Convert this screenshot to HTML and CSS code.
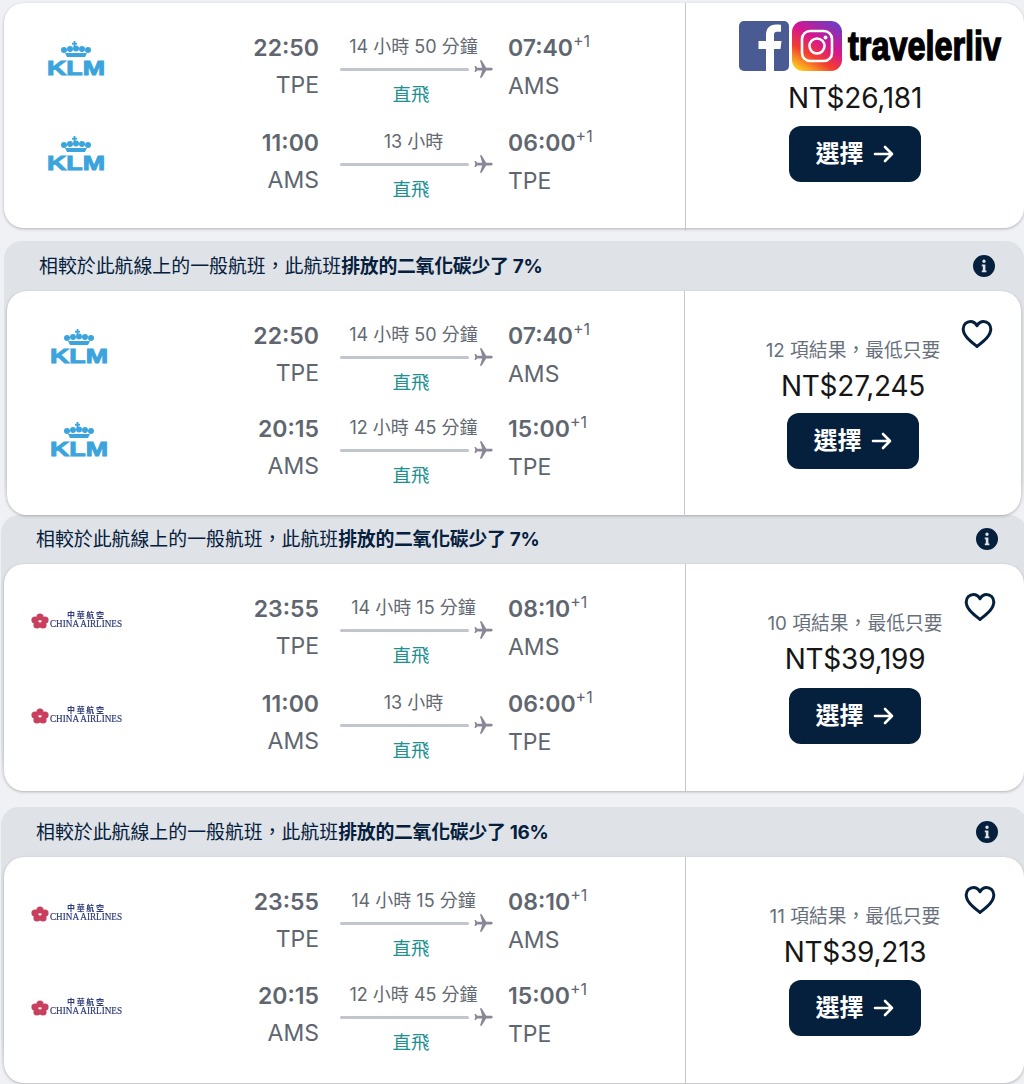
FILE: index.html
```html
<!DOCTYPE html>
<html lang="zh-Hant">
<head>
    <meta charset="UTF-8">
    <meta name="viewport" content="width=device-width, initial-scale=1.0">
    <link rel="stylesheet" href="styles.css">
    <title>航班結果</title>
</head>
<body>
    <svg class="sprite" aria-hidden="true">
        <symbol id="crown" viewBox="0 0 58 35">
            <rect x="26.6" y="0" width="1.8" height="6" />
            <rect x="25" y="1.8" width="5" height="1.8" />
            <circle cx="17" cy="9" r="3" />
            <circle cx="23" cy="8" r="3" />
            <circle cx="29" cy="7.5" r="3" />
            <circle cx="35" cy="8" r="3" />
            <circle cx="41" cy="9" r="3" />
            <path d="M18 12h22l-2 4H20z" />
        </symbol>
        <symbol id="blossom" viewBox="0 0 92 18">
            <g fill="#c9405f">
                <circle cx="10" cy="6" r="3.6" />
                <circle cx="15" cy="9" r="3.6" />
                <circle cx="13" cy="14" r="3.6" />
                <circle cx="7" cy="14" r="3.6" />
                <circle cx="5" cy="9" r="3.6" />
            </g>
        </symbol>
        <symbol id="plane" viewBox="0 0 24 24">
            <path d="M21.5 12c0-.9-.7-1.500-1.600-1.500H14.400L9.400 2.400H7.600l2.400 8.100H4.600L3 8.600H1.600l.9 3.400-.9 3.400H3l1.600-1.900H10l-2.400 8.100h1.800l5-8.100h5.500c.9 0 1.600-.6 1.600-1.500z" />
        </symbol>
        <symbol id="heart" viewBox="0 0 32 30">
            <path d="M16 27.500C9 21.800 2.200 16.600 2.200 10 2.200 5.600 5.600 2.400 9.400 2.400c2.700 0 5.100 1.500 6.600 4.300 1.500-2.800 3.900-4.300 6.600-4.300 3.800 0 7.200 3.200 7.200 7.600 0 6.600-6.800 11.800-13.800 17.500z" fill="none" stroke="currentColor" stroke-width="3" stroke-linejoin="round" />
        </symbol>
        <symbol id="info" viewBox="0 0 22 22">
            <path fill-rule="evenodd" d="M11 0a11 11 0 1 1 0 22 11 11 0 0 1 0-22zM11 4.500a1.700 1.700 0 1 0 0 3.400 1.700 1.700 0 0 0 0-3.400zM8.800 9.500v1.800h1v4.200h-1v1.800h4.600v-1.800h-1V9.500z" />
        </symbol>
        <symbol id="arrow" viewBox="0 0 22 20">
            <path d="M2 10h17M12 3l7 7-7 7" fill="none" stroke="currentColor" stroke-width="2.600" stroke-linecap="round" stroke-linejoin="round" />
        </symbol>
    </svg>

    <!-- result 1, the social badge sits over its price header -->
    <div class="card card-first">
        <div class="flights gap-9">
            <div class="leg">
                <div class="logo"><svg class="logo-klm" viewBox="0 0 58 35"><use href="#crown" /><text x="0" y="34" textLength="58" lengthAdjust="spacingAndGlyphs" class="klm-text">KLM</text></svg></div>
                <div class="end end-from"><div class="time">22:50</div><div class="code">TPE</div></div>
                <div class="route">
                    <div class="duration">14 小時 50 分鐘</div>
                    <div class="track"><span class="line"></span><svg class="plane"><use href="#plane" /></svg></div>
                    <div class="stops">直飛</div>
                </div>
                <div class="end"><div class="time">07:40<sup>+1</sup></div><div class="code">AMS</div></div>
            </div>
            <div class="leg">
                <div class="logo"><svg class="logo-klm" viewBox="0 0 58 35"><use href="#crown" /><text x="0" y="34" textLength="58" lengthAdjust="spacingAndGlyphs" class="klm-text">KLM</text></svg></div>
                <div class="end end-from"><div class="time">11:00</div><div class="code">AMS</div></div>
                <div class="route">
                    <div class="duration">13 小時</div>
                    <div class="track"><span class="line"></span><svg class="plane"><use href="#plane" /></svg></div>
                    <div class="stops">直飛</div>
                </div>
                <div class="end"><div class="time">06:00<sup>+1</sup></div><div class="code">TPE</div></div>
            </div>
        </div>
        <div class="offer">
            <div class="results"></div>
            <div class="price">NT$26,181</div>
            <button class="select"><span class="select-label">選擇</span><svg class="arrow"><use href="#arrow" /></svg></button>
        </div>
        <div class="social">
            <svg class="social-icon" viewBox="0 0 50 50">
                <rect width="50" height="50" rx="5" fill="#4a5a92" />
                <path d="M27 50V28h-7.500v-8H27v-6c0-7 4-10.500 10-10.500 2 0 4 .2 5 .3v7h-3.500c-3 0-3.500 1.500-3.500 3.700V20h7.500l-1 8H35v22z" fill="#fff" />
            </svg>
            <svg class="social-icon" viewBox="0 0 50 50">
                <defs>
                    <linearGradient id="ig" x1="0.2" y1="1" x2="0.8" y2="0">
                        <stop offset="0" stop-color="#fdc81e" />
                        <stop offset="0.3" stop-color="#f2402f" />
                        <stop offset="0.6" stop-color="#d6158f" />
                        <stop offset="1" stop-color="#6f3cc0" />
                    </linearGradient>
                </defs>
                <rect width="50" height="50" rx="11" fill="url(#ig)" />
                <rect x="10" y="10" width="30" height="30" rx="8" fill="none" stroke="#fff" stroke-width="2.600" />
                <circle cx="25" cy="25" r="7.500" fill="none" stroke="#fff" stroke-width="2.600" />
                <circle cx="33.500" cy="16.500" r="1.900" fill="#fff" />
            </svg>
            <svg class="social-name" viewBox="0 0 155 50"><text x="0" y="39" textLength="153" lengthAdjust="spacingAndGlyphs">travelerliv</text></svg>
        </div>
    </div>

    <!-- result 2 -->
    <div class="group group-inset">
        <div class="notice">
            <div class="notice-text">相較於此航線上的一般航班，此航班<b>排放的二氧化碳少了 7%</b></div>
            <svg class="info"><use href="#info" /></svg>
        </div>
        <div class="card pad-19">
            <div class="flights gap-7">
                <div class="leg leg-narrow">
                    <div class="logo"><svg class="logo-klm" viewBox="0 0 58 35"><use href="#crown" /><text x="0" y="34" textLength="58" lengthAdjust="spacingAndGlyphs" class="klm-text">KLM</text></svg></div>
                    <div class="end end-from"><div class="time">22:50</div><div class="code">TPE</div></div>
                    <div class="route">
                        <div class="duration">14 小時 50 分鐘</div>
                        <div class="track"><span class="line"></span><svg class="plane"><use href="#plane" /></svg></div>
                        <div class="stops">直飛</div>
                    </div>
                    <div class="end"><div class="time">07:40<sup>+1</sup></div><div class="code">AMS</div></div>
                </div>
                <div class="leg leg-narrow">
                    <div class="logo"><svg class="logo-klm" viewBox="0 0 58 35"><use href="#crown" /><text x="0" y="34" textLength="58" lengthAdjust="spacingAndGlyphs" class="klm-text">KLM</text></svg></div>
                    <div class="end end-from"><div class="time">20:15</div><div class="code">AMS</div></div>
                    <div class="route">
                        <div class="duration">12 小時 45 分鐘</div>
                        <div class="track"><span class="line"></span><svg class="plane"><use href="#plane" /></svg></div>
                        <div class="stops">直飛</div>
                    </div>
                    <div class="end"><div class="time">15:00<sup>+1</sup></div><div class="code">TPE</div></div>
                </div>
            </div>
            <div class="offer">
                <svg class="heart"><use href="#heart" /></svg>
                <div class="results">12 項結果，最低只要</div>
                <div class="price">NT$27,245</div>
                <button class="select"><span class="select-label">選擇</span><svg class="arrow"><use href="#arrow" /></svg></button>
            </div>
        </div>
    </div>

    <!-- result 3 -->
    <div class="group group-tight">
        <div class="notice">
            <div class="notice-text">相較於此航線上的一般航班，此航班<b>排放的二氧化碳少了 7%</b></div>
            <svg class="info"><use href="#info" /></svg>
        </div>
        <div class="card pad-20">
            <div class="flights gap-9">
                <div class="leg">
                    <div class="logo"><svg class="logo-china" viewBox="0 0 92 18"><use href="#blossom" /><text x="37" y="6.500" textLength="37" class="china-zh">中華航空</text><text x="20" y="16" textLength="72" lengthAdjust="spacingAndGlyphs" class="china-en">CHINA AIRLINES</text></svg></div>
                    <div class="end end-from"><div class="time">23:55</div><div class="code">TPE</div></div>
                    <div class="route">
                        <div class="duration">14 小時 15 分鐘</div>
                        <div class="track"><span class="line"></span><svg class="plane"><use href="#plane" /></svg></div>
                        <div class="stops">直飛</div>
                    </div>
                    <div class="end"><div class="time">08:10<sup>+1</sup></div><div class="code">AMS</div></div>
                </div>
                <div class="leg">
                    <div class="logo"><svg class="logo-china" viewBox="0 0 92 18"><use href="#blossom" /><text x="37" y="6.500" textLength="37" class="china-zh">中華航空</text><text x="20" y="16" textLength="72" lengthAdjust="spacingAndGlyphs" class="china-en">CHINA AIRLINES</text></svg></div>
                    <div class="end end-from"><div class="time">11:00</div><div class="code">AMS</div></div>
                    <div class="route">
                        <div class="duration">13 小時</div>
                        <div class="track"><span class="line"></span><svg class="plane"><use href="#plane" /></svg></div>
                        <div class="stops">直飛</div>
                    </div>
                    <div class="end"><div class="time">06:00<sup>+1</sup></div><div class="code">TPE</div></div>
                </div>
            </div>
            <div class="offer">
                <svg class="heart"><use href="#heart" /></svg>
                <div class="results">10 項結果，最低只要</div>
                <div class="price">NT$39,199</div>
                <button class="select"><span class="select-label">選擇</span><svg class="arrow"><use href="#arrow" /></svg></button>
            </div>
        </div>
    </div>

    <!-- result 4 -->
    <div class="group">
        <div class="notice">
            <div class="notice-text">相較於此航線上的一般航班，此航班<b>排放的二氧化碳少了 16%</b></div>
            <svg class="info"><use href="#info" /></svg>
        </div>
        <div class="card pad-20">
            <div class="flights gap-8">
                <div class="leg">
                    <div class="logo"><svg class="logo-china" viewBox="0 0 92 18"><use href="#blossom" /><text x="37" y="6.500" textLength="37" class="china-zh">中華航空</text><text x="20" y="16" textLength="72" lengthAdjust="spacingAndGlyphs" class="china-en">CHINA AIRLINES</text></svg></div>
                    <div class="end end-from"><div class="time">23:55</div><div class="code">TPE</div></div>
                    <div class="route">
                        <div class="duration">14 小時 15 分鐘</div>
                        <div class="track"><span class="line"></span><svg class="plane"><use href="#plane" /></svg></div>
                        <div class="stops">直飛</div>
                    </div>
                    <div class="end"><div class="time">08:10<sup>+1</sup></div><div class="code">AMS</div></div>
                </div>
                <div class="leg">
                    <div class="logo"><svg class="logo-china" viewBox="0 0 92 18"><use href="#blossom" /><text x="37" y="6.500" textLength="37" class="china-zh">中華航空</text><text x="20" y="16" textLength="72" lengthAdjust="spacingAndGlyphs" class="china-en">CHINA AIRLINES</text></svg></div>
                    <div class="end end-from"><div class="time">20:15</div><div class="code">AMS</div></div>
                    <div class="route">
                        <div class="duration">12 小時 45 分鐘</div>
                        <div class="track"><span class="line"></span><svg class="plane"><use href="#plane" /></svg></div>
                        <div class="stops">直飛</div>
                    </div>
                    <div class="end"><div class="time">15:00<sup>+1</sup></div><div class="code">TPE</div></div>
                </div>
            </div>
            <div class="offer">
                <svg class="heart"><use href="#heart" /></svg>
                <div class="results">11 項結果，最低只要</div>
                <div class="price">NT$39,213</div>
                <button class="select"><span class="select-label">選擇</span><svg class="arrow"><use href="#arrow" /></svg></button>
            </div>
        </div>
    </div>
</body>
</html>
```

FILE: styles.css
```css
html, body {
    margin: 0;
    height: 1084px;
    overflow: hidden;
}

body {
    background-color: #eff1f5;
    font-family: Inter, "Noto Sans CJK TC", sans-serif;
    color: #161616;
}

.sprite {
    position: absolute;
    width: 0;
    height: 0;
}

/* Cards */
.card {
    position: relative;
    display: grid;
    grid-template-columns: 1fr 338px;
    background-color: #fff;
    border-radius: 20px;
    box-shadow: 0 1px 3px rgba(37, 32, 31, 0.3);
}

.card-first {
    margin: 3px 0 13px 4px;
    width: 1020px;
    padding-bottom: 18px;
}

.pad-19 { padding-bottom: 19px; }
.pad-20 { padding-bottom: 20px; }

.flights {
    display: flex;
    flex-direction: column;
    padding-top: 26px;
    border-right: 1px solid #c2c9cd;
    margin-bottom: -21px;
    padding-bottom: 21px;
}

.gap-7 { gap: 7px; }
.gap-8 { gap: 8px; }
.gap-9 { gap: 9px; }

/* One flight leg */
.leg {
    display: grid;
    grid-template-columns: 144px 171px 176px auto;
    align-items: start;
    height: 86px;
}

.leg-narrow {
    grid-template-columns: 144px 168px 176px auto;
}

.logo {
    display: flex;
    justify-content: center;
    align-items: center;
    height: 59px;
}

.logo-klm {
    width: 58px;
    height: 35px;
    fill: #3ba4dd;
    overflow: visible;
}

.logo-china {
    width: 92px;
    height: 18px;
    filter: blur(0.35px);
    overflow: visible;
}

.klm-text {
    font-family: "Liberation Sans", sans-serif;
    font-size: 21px;
    font-weight: 700;
    stroke: #3ba4dd;
    stroke-width: 1px;
}

.china-zh {
    font-family: "Noto Sans CJK TC", sans-serif;
    font-size: 8px;
    font-weight: 700;
    fill: #2c3a78;
}

.china-en {
    font-family: "Liberation Serif", serif;
    font-size: 10px;
    fill: #2c3a78;
    stroke: #2c3a78;
    stroke-width: 0.2px;
}

.end {
    color: #5f6670;
    padding-left: 13px;
}

.end-from {
    text-align: right;
    padding-left: 0;
}

.time {
    font-size: 23px;
    font-weight: 600;
    line-height: 39px;
    white-space: nowrap;
}

.time sup {
    font-size: 16px;
    font-weight: 400;
    line-height: 0;
    vertical-align: 9px;
}

.code {
    font-size: 23px;
    line-height: 36px;
}

.end-from .code {
    margin-top: -1px;
}

.route {
    margin-left: 21px;
    width: 155px;
    text-align: center;
}

.duration {
    color: #626971;
    font-size: 18px;
    line-height: 36px;
    padding-right: 8px;
    white-space: nowrap;
}

.track {
    display: flex;
    align-items: center;
    height: 10px;
    gap: 4px;
    margin-top: -1px;
}

.line {
    flex: 1;
    height: 3px;
    border-radius: 2px;
    background-color: #c1c5ce;
}

.plane {
    width: 22px;
    height: 22px;
    fill: #8a8799;
    flex: none;
}

.stops {
    color: #20908f;
    font-size: 18.500px;
    line-height: 40px;
    padding-right: 13px;
}

/* Price column */
.offer {
    position: relative;
    display: flex;
    flex-direction: column;
    align-items: center;
    padding-top: 48px;
}

.results {
    height: 24px;
    color: #68707c;
    font-size: 18.800px;
    line-height: 24px;
    white-space: nowrap;
}

.price {
    margin-top: 5px;
    font-size: 28px;
    letter-spacing: -0.25px;
    line-height: 36px;
    white-space: nowrap;
}

.select {
    display: flex;
    align-items: center;
    justify-content: center;
    gap: 9px;
    margin-top: 10px;
    width: 132px;
    height: 56px;
    padding: 0;
    border: none;
    border-radius: 12px;
    background-color: #05203c;
    color: #fff;
    font-family: inherit;
    font-size: 24px;
    font-weight: 700;
}

.select-label {
    margin-top: -5px;
}

.arrow {
    width: 22px;
    height: 20px;
}

.heart {
    position: absolute;
    top: 28px;
    right: 28px;
    width: 32px;
    height: 30px;
    color: #05203c;
}

/* Notice banner, its tint runs down behind the card and fades out */
.group {
    margin-left: 1px;
    width: 1026px;
    margin-bottom: 16px;
    background: linear-gradient(to bottom, #dfe2e7 85%, #eff1f5 97%);
    border-radius: 18px;
}

.group-inset {
    margin-left: 4px;
    width: 1020px;
    margin-bottom: 0;
}

.group-inset .card {
    grid-template-columns: 1fr 336px;
}

.group-inset .select {
    margin-top: 9px;
}

.notice {
    display: flex;
    justify-content: space-between;
    align-items: flex-start;
    height: 50px;
    padding: 0 29px 0 35px;
    box-sizing: border-box;
    color: #05203c;
    font-size: 18.900px;
}

.notice-text {
    line-height: 52px;
}

.notice-text b {
    font-weight: 700;
    letter-spacing: -0.3px;
}

.info {
    width: 22px;
    height: 22px;
    margin-top: 14px;
    fill: #05203c;
}

.group-tight .notice {
    height: 49px;
}

.group-tight .notice-text {
    line-height: 50px;
}

.group-tight .info {
    margin-top: 13px;
}

.group-tight .select {
    margin-top: 11px;
}

.group .card {
    margin: 0 3px;
}

/* Social badge drawn over the first result */
.social {
    position: absolute;
    top: 18px;
    right: 21px;
    display: flex;
    align-items: center;
    gap: 3px;
    padding-bottom: 4px;
    background-color: #fff;
}

.social-icon {
    width: 50px;
    height: 50px;
}

.social-name {
    width: 155px;
    height: 50px;
    margin-left: 3px;
    font-family: "Liberation Sans Narrow", "Liberation Sans", sans-serif;
    font-size: 40px;
    font-weight: 700;
    stroke: #000;
    stroke-width: 1.400px;
    overflow: visible;
}
```
